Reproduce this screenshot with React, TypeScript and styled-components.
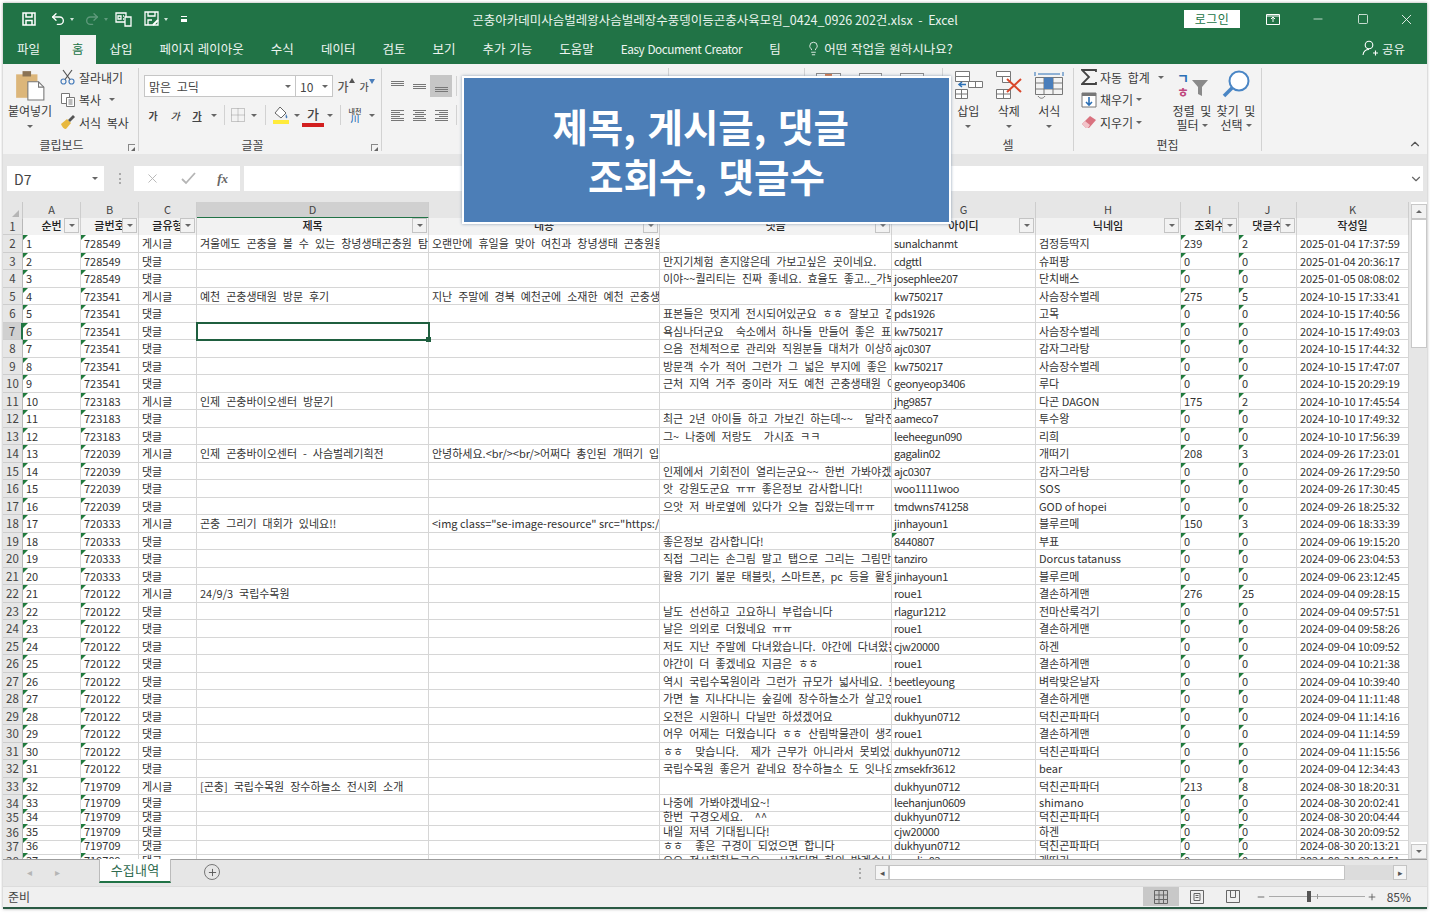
import React from 'react';
import styled, { createGlobalStyle } from 'styled-components';
import { ChevronDown, ChevronUp, Lightbulb, Minus, Plus, Redo2, Square, Undo2, X } from 'lucide-react';

const FONT = '"Noto Sans CJK KR", "Noto Sans", sans-serif';
const GREEN = '#217346';
const COLUMNS = '20px 58px 58px 58px 232px 231px 232px 144px 145px 58px 58px 112px';

const HEADERS = ['순번', '글번호', '글유형', '제목', '내용', '댓글', '아이디', '닉네임', '조회수', '댓글수', '작성일'];
const LETTERS = ['A', 'B', 'C', 'D', 'E', 'F', 'G', 'H', 'I', 'J', 'K'];

// post no, type, title, body, comment, id, nick, views, replies, date
type Row = [string, string, string, string, string, string, string, string, string, string];

const POST = '게시글';
const REPLY = '댓글';

const ROWS: Row[] = [
  ['728549', POST, '겨울에도 곤충을 볼 수 있는 창녕생태곤충원 탐방기', '오랜만에 휴일을 맞아 여친과 창녕생태 곤충원을 방문했습니다', '', 'sunalchanmt', '검정등딱지', '239', '2', '2025-01-04 17:37:59'],
  ['728549', REPLY, '', '', '만지기체험 흔지않은데 가보고싶은 곳이네요.', 'cdgttl', '슈퍼팡', '0', '0', '2025-01-04 20:36:17'],
  ['728549', REPLY, '', '', '이야~~퀄리티는 진짜 좋네요. 효율도 좋고.._가봐야겠어요', 'josephlee207', '단치배스', '0', '0', '2025-01-05 08:08:02'],
  ['723541', POST, '예천 곤충생태원 방문 후기', '지난 주말에 경북 예천군에 소재한 예천 곤충생태원을 다녀왔습니다', '', 'kw750217', '사슴장수벌레', '275', '5', '2024-10-15 17:33:41'],
  ['723541', REPLY, '', '', '표본들은 멋지게 전시되어있군요 ㅎㅎ 잘보고 갑니다', 'pds1926', '고목', '0', '0', '2024-10-15 17:40:56'],
  ['723541', REPLY, '', '', '욕심나더군요  숙소에서 하나둘 만들어 좋은 표본을', 'kw750217', '사슴장수벌레', '0', '0', '2024-10-15 17:49:03'],
  ['723541', REPLY, '', '', '으음 전체적으로 관리와 직원분들 대처가 이상하네요', 'ajc0307', '감자그라탕', '0', '0', '2024-10-15 17:44:32'],
  ['723541', REPLY, '', '', '방문객 수가 적어 그런가 그 넓은 부지에 좋은 시설이', 'kw750217', '사슴장수벌레', '0', '0', '2024-10-15 17:47:07'],
  ['723541', REPLY, '', '', '근처 지역 거주 중이라 저도 예천 곤충생태원 여러번', 'geonyeop3406', '루다', '0', '0', '2024-10-15 20:29:19'],
  ['723183', POST, '인제 곤충바이오센터 방문기', '', '', 'jhg9857', '다곤 DAGON', '175', '2', '2024-10-10 17:45:54'],
  ['723183', REPLY, '', '', '최근 2년 아이들 하고 가보긴 하는데~~  달라진 것이', 'aameco7', '투수왕', '0', '0', '2024-10-10 17:49:32'],
  ['723183', REPLY, '', '', '그~ 나중에 저랑도  가시죠 ㅋㅋ', 'leeheegun090', '리희', '0', '0', '2024-10-10 17:56:39'],
  ['722039', POST, '인제 곤충바이오센터 - 사슴벌레기획전', '안녕하세요.<br/><br/>어쩌다 총인된 개떠기 입니다', '', 'gagalin02', '개떠기', '208', '3', '2024-09-26 17:23:01'],
  ['722039', REPLY, '', '', '인제에서 기회전이 열리는군요~~ 한번 가봐야겠어요', 'ajc0307', '감자그라탕', '0', '0', '2024-09-26 17:29:50'],
  ['722039', REPLY, '', '', '앗 강원도군요 ㅠㅠ 좋은정보 감사합니다!', 'woo1111woo', 'SOS', '0', '0', '2024-09-26 17:30:45'],
  ['722039', REPLY, '', '', '으앗 저 바로옆에 있다가 오늘 집왔는데ㅠㅠ', 'tmdwns741258', 'GOD of hopei', '0', '0', '2024-09-26 18:25:32'],
  ['720333', POST, '곤충 그리기 대회가 있네요!!', '<img class="se-image-resource" src="https://dcimg', '', 'jinhayoun1', '블루르메', '150', '3', '2024-09-06 18:33:39'],
  ['720333', REPLY, '', '', '좋은정보 감사합니다!', '8440807', '부표', '0', '0', '2024-09-06 19:15:20'],
  ['720333', REPLY, '', '', '직접 그리는 손그림 말고 탭으로 그리는 그림만', 'tanziro', 'Dorcus tatanuss', '0', '0', '2024-09-06 23:04:53'],
  ['720333', REPLY, '', '', '활용 기기 불문 태블릿, 스마트폰, pc 등을 활용하여', 'jinhayoun1', '블루르메', '0', '0', '2024-09-06 23:12:45'],
  ['720122', POST, '24/9/3 국립수목원', '', '', 'roue1', '결손하게맨', '276', '25', '2024-09-04 09:28:15'],
  ['720122', REPLY, '', '', '날도 선선하고 고요하니 부럽습니다', 'rlagur1212', '전마산룩걱기', '0', '0', '2024-09-04 09:57:51'],
  ['720122', REPLY, '', '', '날은 의외로 더웠네요 ㅠㅠ', 'roue1', '결손하게맨', '0', '0', '2024-09-04 09:58:26'],
  ['720122', REPLY, '', '', '저도 지난 주말에 다녀왔습니다. 야간에 다녀왔는데', 'cjw20000', '하겐', '0', '0', '2024-09-04 10:09:52'],
  ['720122', REPLY, '', '', '야간이 더 좋겠네요 지금은 ㅎㅎ', 'roue1', '결손하게맨', '0', '0', '2024-09-04 10:21:38'],
  ['720122', REPLY, '', '', '역시 국립수목원이라 그런가 규모가 넓사네요. 모두', 'beetleyoung', '벼락맞은날자', '0', '0', '2024-09-04 10:39:40'],
  ['720122', REPLY, '', '', '가면 늘 지나다니는 숲길에 장수하늘소가 살고있다니', 'roue1', '결손하게맨', '0', '0', '2024-09-04 11:11:48'],
  ['720122', REPLY, '', '', '오전은 시원하니 다닐만 하셨겠어요', 'dukhyun0712', '덕친곤파파더', '0', '0', '2024-09-04 11:14:16'],
  ['720122', REPLY, '', '', '어우 어제는 더웠습니다 ㅎㅎ 산림박물관이 생각보다', 'roue1', '결손하게맨', '0', '0', '2024-09-04 11:14:59'],
  ['720122', REPLY, '', '', 'ㅎㅎ  맞습니다.  제가 근무가 아니라서 못뵈었군요', 'dukhyun0712', '덕친곤파파더', '0', '0', '2024-09-04 11:15:56'],
  ['720122', REPLY, '', '', '국립수목원 좋은거 같네요 장수하늘소 도 잇나요', 'zmsekfr3612', 'bear', '0', '0', '2024-09-04 12:34:43'],
  ['719709', POST, '[곤충] 국립수목원 장수하늘소 전시회 소개', '', '', 'dukhyun0712', '덕친곤파파더', '213', '8', '2024-08-30 18:20:31'],
  ['719709', REPLY, '', '', '나중에 가봐야겠네요~!', 'leehanjun0609', 'shimano', '0', '0', '2024-08-30 20:02:41'],
  ['719709', REPLY, '', '', '한번 구경오세요.  ^^', 'dukhyun0712', '덕친곤파파더', '0', '0', '2024-08-30 20:04:44'],
  ['719709', REPLY, '', '', '내일 저녁 기대됩니다!', 'cjw20000', '하겐', '0', '0', '2024-08-30 20:09:52'],
  ['719709', REPLY, '', '', 'ㅎㅎ  좋은 구경이 되었으면 합니다', 'dukhyun0712', '덕친곤파파더', '0', '0', '2024-08-30 20:13:21'],
  ['719709', REPLY, '', '', '오오 전시회하는구요 .. 시간되면 한의 방계슴니다', 'gagalin02', '개떠기', '0', '0', '2024-08-31 03:04:51'],
];

const TABS = ['삽입', '페이지 레이아웃', '수식', '데이터', '검토', '보기', '추가 기능', '도움말'];

const hasHangul = (text: string) => /[가-힣]/.test(text);

function App() {
  return (
    <Page>
      <GlobalStyle />
      <Window>
        <TitleBar>
          <Quick>
            <QuickSlot $left={18}>
              <svg width="16" height="16" viewBox="0 0 16 16" fill="none" stroke="#fff" strokeWidth="1.5">
                <path d="M2 2h12v12H2z" />
                <path d="M5 2v4h6V2M5 14V9.500h6V14" />
              </svg>
            </QuickSlot>
            <QuickSlot $left={13}>
              <Undo2 size={16} color="#fff" strokeWidth={2} />
              <TinyCaret $color="#cfe3d8" />
            </QuickSlot>
            <QuickSlot $left={10}>
              <Redo2 size={16} color="#5f9a7c" strokeWidth={2} />
              <TinyCaret $color="#5f9a7c" />
            </QuickSlot>
            <QuickSlot $left={7}>
              <svg width="17" height="16" viewBox="0 0 17 16" fill="none" stroke="#fff" strokeWidth="1.300">
                <path d="M1 2h10v9H1zM3 5h3v3H3zM8 5h1M8 8h1" />
                <path d="M10 6h6v9h-6z" fill="#217346" />
              </svg>
            </QuickSlot>
            <QuickSlot $left={12}>
              <svg width="16" height="16" viewBox="0 0 16 16" fill="none" stroke="#fff" strokeWidth="1.300">
                <path d="M1 1h13v13H1zM4 1v4h7V1M4 14V9h4" />
                <path d="M9 14l5-5" strokeWidth="2" />
              </svg>
              <TinyCaret $color="#cfe3d8" />
            </QuickSlot>
            <QuickSlot $left={13}>
              <Customize />
            </QuickSlot>
          </Quick>
          <FileName>곤충아카데미사슴벌레왕사슴벌레장수풍뎅이등곤충사육모임_0424_0926 202건.xlsx &nbsp;-&nbsp; Excel</FileName>
          <Controls>
            <LoginButton>로그인</LoginButton>
            <WindowButton>
              <svg width="14" height="11" viewBox="0 0 14 11" fill="none" stroke="#fff">
                <path d="M.5.500h13v10H.500z" />
                <path d="M7 8V3M5 5l2-2 2 2M.500 2h13" />
              </svg>
            </WindowButton>
            <WindowButton><Minus size={14} color="#fff" strokeWidth={1.2} /></WindowButton>
            <WindowButton><Square size={12} color="#fff" strokeWidth={1.5} /></WindowButton>
            <WindowButton $narrow><X size={17} color="#fff" strokeWidth={1.2} /></WindowButton>
          </Controls>
        </TitleBar>

        <TabBar>
          <MenuTab>파일</MenuTab>
          <MenuTab $active>홈</MenuTab>
          {TABS.map((tab) => (
            <MenuTab key={tab}>{tab}</MenuTab>
          ))}
          <MenuTab $latin>Easy Document Creator</MenuTab>
          <MenuTab>팀</MenuTab>
          <TellMe>
            <Lightbulb size={15} color="#fff" strokeWidth={1.3} />
            어떤 작업을 원하시나요?
          </TellMe>
          <Share>
            <svg width="16" height="16" viewBox="0 0 16 16" fill="none" stroke="#fff" strokeWidth="1.100">
              <circle cx="7" cy="5" r="3.800" />
              <path d="M1 15c.5-3.500 2.500-5.500 6-5.500M11 13h5M13.500 10.500v5" />
            </svg>
            공유
          </Share>
        </TabBar>

        <Ribbon>
          <Group $width={136}>
            <GroupBody>
              <LargeButton $width={54}>
                <svg width="32" height="32" viewBox="0 0 30 30">
                  <path d="M2 5h20v22H2z" fill="#dcb67a" />
                  <path d="M8 2h8v5H8z" fill="#8a7355" />
                  <path d="M13 12h10l5 5v12H13z" fill="#fff" stroke="#777" />
                  <path d="M23 12v5h5" fill="none" stroke="#777" />
                </svg>
                <LargeLabel>붙여넣기</LargeLabel>
                <Caret />
              </LargeButton>
              <SmallList>
                <SmallItem>
                  <svg width="16" height="16" viewBox="0 0 16 16" fill="none" stroke="#4a7ebb" strokeWidth="1.200">
                    <circle cx="3.500" cy="12.500" r="2.500" />
                    <circle cx="11.500" cy="12.500" r="2.500" />
                    <path d="M5 10.500L12 1M10 10.500L3 1" stroke="#555" />
                  </svg>
                  잘라내기
                </SmallItem>
                <SmallItem>
                  <svg width="16" height="16" viewBox="0 0 16 16" fill="#fff" stroke="#777">
                    <path d="M1.500 1.500h8v10h-8z" />
                    <path d="M6.500 5.500h8v9h-8zM8.500 8h4M8.500 10h4M8.500 12h4" />
                  </svg>
                  복사
                  <CaretGap><Caret /></CaretGap>
                </SmallItem>
                <SmallItem>
                  <svg width="16" height="16" viewBox="0 0 16 16">
                    <path d="M1 10l6-5 4 4-5 6c-2 0-4-2-5-5z" fill="#e8b93f" />
                    <path d="M8 6l5-5 2 2-5 5z" fill="#555" />
                  </svg>
                  서식 복사
                </SmallItem>
              </SmallList>
            </GroupBody>
            <GroupLabel $shift={18}>클립보드<Launcher /></GroupLabel>
          </Group>

          <Group $width={243}>
            <GroupBody $column>
              <ToolRow $pad={5}>
                <Combo $width={152}>맑은 고딕<Caret /></Combo>
                <Combo $width={38}>10<Caret /></Combo>
                <SizeGlyph $left={4}>가<svg width="6" height="5" viewBox="0 0 6 5"><path d="M3 0l3 5H0z" fill="#555" /></svg></SizeGlyph>
                <SizeGlyph $left={1} $small>가<svg width="6" height="5" viewBox="0 0 6 5"><path d="M3 5l3-5H0z" fill="#4a7ebb" /></svg></SizeGlyph>
              </ToolRow>
              <ToolRow>
                <ToolButton $width={22} $weight={700}>가</ToolButton>
                <ToolButton $width={22} $italic>가</ToolButton>
                <ToolButton $width={22} $underline>가</ToolButton>
                <ToolButton $width={12}><Caret /></ToolButton>
                <ToolDivider />
                <ToolButton $width={18}>
                  <svg width="14" height="14" viewBox="0 0 14 14" fill="none" stroke="#999" strokeDasharray="1 1">
                    <path d="M.5.500h13v13H.500zM7 .500v13M.500 7h13" />
                  </svg>
                </ToolButton>
                <ToolButton $width={14}><Caret /></ToolButton>
                <ToolDivider />
                <ToolButton $width={22}>
                  <svg width="18" height="18" viewBox="0 0 18 18">
                    <path d="M8 1l6 6-5 5-6-5z" fill="#fff" stroke="#666" />
                    <path d="M14 8c1 2 2 3 1 4s-2-1-1-4z" fill="#4a7ebb" />
                    <path d="M1 14h16v4H1z" fill="#ffeb3b" />
                  </svg>
                </ToolButton>
                <ToolButton $width={10}><Caret /></ToolButton>
                <FontColor>가</FontColor>
                <ToolButton $width={12}><Caret /></ToolButton>
                <ToolDivider />
                <ToolButton $width={20}><Phonetic><b>내천</b><i>川</i></Phonetic></ToolButton>
                <ToolButton $width={14}><Caret /></ToolButton>
              </ToolRow>
            </GroupBody>
            <GroupLabel $shift={15}>글꼴<Launcher /></GroupLabel>
          </Group>

          <Group $width={287}>
            <GroupBody $column>
              <ToolRow $pad={4}>
                <ToolButton $width={22}><Lines variant="top" /></ToolButton>
                <ToolButton $width={22}><Lines variant="middle" /></ToolButton>
                <ToolButton $width={22} $pressed><Lines variant="bottom" /></ToolButton>
                <ToolDivider />
              </ToolRow>
              <ToolRow $pad={4}>
                <ToolButton $width={22}><Lines variant="left" /></ToolButton>
                <ToolButton $width={22}><Lines variant="center" /></ToolButton>
                <ToolButton $width={22}><Lines variant="right" /></ToolButton>
                <ToolDivider />
              </ToolRow>
            </GroupBody>
            <GroupLabel />
          </Group>

          <Group $width={136}>
            <GroupBody />
            <GroupLabel />
          </Group>

          <Group $width={138}>
            <PeekRow>
              <PeekIcon $width={26} $accent />
              <PeekIcon $width={23} />
              <PeekIcon $width={25} />
            </PeekRow>
            <GroupLabel />
          </Group>

          <Group $width={131}>
            <GroupBody $pad={5}>
              <LargeButton $width={40.5}>
                <svg width="32" height="32" viewBox="0 0 32 32" fill="#fff" stroke="#777">
                  <path d="M3.500 2.500h14v5h-14zM3.500 7.500h14v5h-14zM3.500 20.500h12v9h-12zM9.500 20.500v9M3.500 25h12" />
                  <path d="M16.500 12.500h14v6h-14zM23.500 12.500v6" />
                  <path d="M14 15.500H7M10 13l-3 2.500 3 2.500" stroke="#2b6fb5" strokeWidth="1.500" fill="none" />
                </svg>
                <LargeLabel>삽입</LargeLabel>
                <Caret />
              </LargeButton>
              <LargeButton $width={40.5}>
                <svg width="32" height="32" viewBox="0 0 32 32" fill="#fff" stroke="#777">
                  <path d="M3.500 2.500h14v5h-14zM9.500 7.500h8v6h-8zM3.500 20.500h14v9h-14zM10.500 20.500v9M3.500 25h14" />
                  <path d="M14 10l14 13M28 10L14 23" stroke="#d9472b" strokeWidth="2" />
                </svg>
                <LargeLabel>삭제</LargeLabel>
                <Caret />
              </LargeButton>
              <LargeButton $width={40.5}>
                <svg width="32" height="32" viewBox="0 0 32 32" fill="none" stroke="#777">
                  <path d="M2.500 8.500h27v17h-27zM2.500 14h27M2.500 20h27M11 8.500v17M20 8.500v17" />
                  <path d="M11 8.500h9v11.500h-9z" fill="#4a7ebb" stroke="none" />
                  <path d="M2 3v4M30 3v4M5 5h22" stroke="#2b6fb5" />
                  <path d="M5 27c2 3 5 3 7 0" />
                </svg>
                <LargeLabel>서식</LargeLabel>
                <Caret />
              </LargeButton>
            </GroupBody>
            <GroupLabel>셀</GroupLabel>
          </Group>

          <Group $width={188}>
            <GroupBody $pad={7}>
              <SmallList $width={89}>
                <SmallItem>
                  <svg width="16" height="16" viewBox="0 0 16 16" fill="none" stroke="#444" strokeWidth="1.800">
                    <path d="M15 3V1H1l7 7-7 7h14v-2" />
                  </svg>
                  자동 합계
                  <CaretGap><Caret /></CaretGap>
                </SmallItem>
                <SmallItem>
                  <svg width="16" height="16" viewBox="0 0 16 16">
                    <path d="M1 1h14v14H1z" fill="#fff" stroke="#777" />
                    <path d="M1 1h14v3H1z" fill="#777" />
                    <path d="M8 5v8M5 10l3 3 3-3" fill="none" stroke="#2b6fb5" strokeWidth="1.600" />
                  </svg>
                  채우기
                  <Caret />
                </SmallItem>
                <SmallItem>
                  <svg width="16" height="16" viewBox="0 0 16 16">
                    <path d="M1 10l8-8 6 4-7 8H5z" fill="#d9727f" />
                    <path d="M1 10l3-3 5 4-2 3H5z" fill="#f2c3c9" />
                  </svg>
                  지우기
                  <Caret />
                </SmallItem>
              </SmallList>
              <LargeButton $width={44}>
                <SortIcon>
                  <svg width="34" height="28" viewBox="0 0 34 28">
                    <path d="M17 9h16l-6 7v9l-4-2v-7z" fill="#8a8a8a" />
                    <text x="2" y="12" fontSize="13" fontWeight="700" fill="#2b6fb5" fontFamily={FONT}>ㄱ</text>
                    <text x="2" y="26" fontSize="13" fontWeight="700" fill="#c0487e" fontFamily={FONT}>ㅎ</text>
                  </svg>
                </SortIcon>
                <TwoLine>정렬 및<span>필터 <Caret /></span></TwoLine>
              </LargeButton>
              <LargeButton $width={44}>
                <svg width="30" height="30" viewBox="0 0 30 30" fill="none">
                  <circle cx="18" cy="12" r="9.500" stroke="#4a86c5" strokeWidth="2" fill="#fff" />
                  <path d="M11 19l-8 8" stroke="#4a86c5" strokeWidth="3.500" />
                </svg>
                <TwoLine>찾기 및<span>선택 <Caret /></span></TwoLine>
              </LargeButton>
            </GroupBody>
            <GroupLabel>편집</GroupLabel>
          </Group>

          <Collapse><ChevronUp size={14} color="#555" strokeWidth={2} /></Collapse>
        </Ribbon>

        <FormulaBar>
          <NameBox>D7<Caret /></NameBox>
          <FormulaGrip />
          <FormulaButtons>
            <X size={15} color="#b5b5b5" strokeWidth={1.5} />
            <svg width="15" height="13" viewBox="0 0 15 13" fill="none" stroke="#b5b5b5" strokeWidth="1.800"><path d="M1 7l4 4 9-10" /></svg>
            <FxLabel>fx</FxLabel>
          </FormulaButtons>
          <FormulaInput><ChevronDown size={14} color="#666" strokeWidth={2} /></FormulaInput>
        </FormulaBar>

        <Sheet>
          <Grid>
            <ColumnHeaders>
              <Corner><CornerMark /></Corner>
              {LETTERS.map((letter) => (
                <ColumnLetter key={letter} $selected={letter === 'D'}>{letter}</ColumnLetter>
              ))}
            </ColumnHeaders>
            <HeaderRow>
              <RowNumber>1</RowNumber>
              {HEADERS.map((header) => (
                <HeaderCell key={header}>
                  {header}
                  {header !== '작성일' && <FilterButton><Caret /></FilterButton>}
                </HeaderCell>
              ))}
            </HeaderRow>
            {ROWS.map((row, i) => (
              <DataRow key={i} $short={i >= 32}>
                <RowNumber $selected={i === 5}>{i + 2}</RowNumber>
                <Cell $flag $short={i >= 32}>{i + 1}</Cell>
                <Cell $flag $short={i >= 32}>{row[0]}</Cell>
                <Cell $short={i >= 32}>{row[1]}</Cell>
                <Cell $short={i >= 32} $selected={i === 5} $spaced={hasHangul(row[2])}>{row[2]}</Cell>
                <Cell $short={i >= 32} $spaced={hasHangul(row[3])}>{row[3]}</Cell>
                <Cell $short={i >= 32} $spaced={hasHangul(row[4])}>{row[4]}</Cell>
                <Cell $short={i >= 32} $flag={row[5] === '8440807'} $tight>{row[5]}</Cell>
                <Cell $short={i >= 32}>{row[6]}</Cell>
                <Cell $short={i >= 32} $flag>{row[7]}</Cell>
                <Cell $short={i >= 32} $flag>{row[8]}</Cell>
                <Cell $short={i >= 32} $date>{row[9]}</Cell>
              </DataRow>
            ))}
          </Grid>
          <VScroll>
            <ScrollEnd><UpTriangle /></ScrollEnd>
            <VThumb />
            <VTrack />
            <ScrollEnd><Caret /></ScrollEnd>
          </VScroll>
        </Sheet>

        <SheetTabs>
          <NavArrow>◂</NavArrow>
          <NavArrow>▸</NavArrow>
          <SheetTab>수집내역</SheetTab>
          <AddSheet><Plus size={11} color="#555" strokeWidth={2} /></AddSheet>
          <TabSpacer />
          <GripDots />
          <HScroll>
            <HEnd>◂</HEnd>
            <HThumb />
            <HTrack />
            <HEnd>▸</HEnd>
          </HScroll>
        </SheetTabs>

        <StatusBar>
          <Ready>준비</Ready>
          <ViewButton $active>
            <svg width="14" height="14" viewBox="0 0 14 14" fill="none" stroke="#666"><path d="M.5.500h13v13H.500zM.500 5h13M.500 9.500h13M5 .500v13M9.500 .500v13" /></svg>
          </ViewButton>
          <ViewButton>
            <svg width="14" height="14" viewBox="0 0 14 14" fill="none" stroke="#666"><path d="M.5.500h13v13H.500zM4 3.500h6v7H4zM5.500 5.500h3M5.500 7.500h3" /></svg>
          </ViewButton>
          <ViewButton>
            <svg width="14" height="14" viewBox="0 0 14 14" fill="none" stroke="#666"><path d="M.5.500h13v12H.500zM4.500 .500v7h5v-7" /></svg>
          </ViewButton>
          <ZoomMinus><Minus size={10} color="#555" strokeWidth={2} /></ZoomMinus>
          <ZoomTrack><ZoomTick /><ZoomThumb /></ZoomTrack>
          <ZoomPlus><Plus size={10} color="#555" strokeWidth={2} /></ZoomPlus>
          <ZoomValue>85%</ZoomValue>
        </StatusBar>

        <Overlay>
          제목, 게시글, 댓글&nbsp;
          <br />
          조회수, 댓글수
        </Overlay>
      </Window>
    </Page>
  );
}

function Lines({ variant }: { variant: string }) {
  const vertical: Record<string, number> = { top: 1, middle: 4, bottom: 7 };
  if (variant in vertical) {
    const y = vertical[variant];
    return (
      <svg width="15" height="13" viewBox="0 0 15 13" stroke="#777">
        <path d={`M1 ${y + 0.5}h13M1 ${y + 2.5}h13M1 ${y + 4.5}h13`} />
      </svg>
    );
  }
  const short: Record<string, string> = { left: 'M1 3.500h9M1 7.500h9', center: 'M3 3.500h9M3 7.500h9', right: 'M5 3.500h9M5 7.500h9' };
  return (
    <svg width="15" height="13" viewBox="0 0 15 13" stroke="#777">
      <path d={`M1 1.500h13M1 5.500h13M1 9.500h13M1 11.500h13 ${short[variant]}`} />
    </svg>
  );
}

const GlobalStyle = createGlobalStyle`
  html, body { margin: 0; padding: 0; background: #fff; }
  body { font-family: ${FONT}; color: #333; }
  * { box-sizing: border-box; }
  svg { display: block; flex: none; }
`;
const Page = styled.div`
  padding: 3px;
  width: 1430px;
  height: 913px;
  overflow: hidden;
`;
const Window = styled.div`
  position: relative;
  width: 1424px;
  height: 906px;
  display: flex;
  flex-direction: column;
  border-bottom: 2px solid #2a5a44;
  box-shadow: 0 0 3px rgba(0, 0, 0, 0.35);
  background: #f3f3f3;
`;
const TitleBar = styled.div`
  height: 32px;
  display: grid;
  grid-template-columns: 1fr auto 1fr;
  align-items: center;
  background: ${GREEN};
`;
const Quick = styled.div`
  display: flex;
  align-items: center;
`;
const QuickSlot = styled.div<{ $left: number }>`
  display: flex;
  align-items: center;
  gap: 4px;
  margin-left: ${({ $left }) => $left}px;
`;
const TinyCaret = styled.span<{ $color: string }>`
  width: 0;
  height: 0;
  border-left: 2.500px solid transparent;
  border-right: 2.500px solid transparent;
  border-top: 3px solid ${({ $color }) => $color};
`;
const Customize = styled.span`
  width: 6px;
  height: 6px;
  border-top: 1px solid #fff;
  border-bottom: 3px solid #fff;
`;
const FileName = styled.div`
  font-size: 12.500px;
  color: #eaf3ee;
  white-space: nowrap;
`;
const Controls = styled.div`
  display: flex;
  align-items: center;
  justify-content: flex-end;
  height: 100%;
`;
const LoginButton = styled.div`
  width: 56px;
  height: 18px;
  margin-right: 10px;
  background: #fff;
  color: ${GREEN};
  font-size: 12px;
  line-height: 18px;
  text-align: center;
  letter-spacing: 0.500px;
`;
const WindowButton = styled.div<{ $narrow?: boolean }>`
  width: ${({ $narrow }) => ($narrow ? 42 : 45)}px;
  display: flex;
  justify-content: center;
`;
const TabBar = styled.div`
  height: 29px;
  display: flex;
  align-items: stretch;
  padding-left: 0.500px;
  background: ${GREEN};
`;
const MenuTab = styled.div<{ $active?: boolean; $latin?: boolean }>`
  padding: 0 ${({ $active }) => ($active ? 12.500 : 13.500)}px 3px;
  margin-left: ${({ $active }) => ($active ? 6 : 0)}px;
  display: flex;
  align-items: center;
  font-size: ${({ $latin }) => ($latin ? 11.800 : 12.500)}px;
  letter-spacing: ${({ $latin }) => ($latin ? -0.450 : 0)}px;
  word-spacing: 1px;
  white-space: nowrap;
  color: ${({ $active }) => ($active ? GREEN : '#eef5f1')};
  background: ${({ $active }) => ($active ? '#f3f3f3' : 'transparent')};
`;
const TellMe = styled.div`
  display: flex;
  align-items: center;
  gap: 3px;
  margin-left: 12px;
  padding-bottom: 3px;
  font-size: 12.500px;
  word-spacing: 1px;
  color: #eef5f1;
  white-space: nowrap;
`;
const Share = styled.div`
  margin-left: auto;
  margin-right: 22px;
  display: flex;
  align-items: center;
  gap: 4px;
  padding-bottom: 3px;
  font-size: 12.500px;
  color: #eef5f1;
`;
const Ribbon = styled.div`
  height: 90px;
  display: flex;
  padding: 4px 0 3px;
  background: #f3f3f3;
  font-size: 12px;
  word-spacing: 3px;
  color: #3a3a3a;
`;
const Group = styled.div<{ $width: number }>`
  width: ${({ $width }) => $width}px;
  flex: none;
  display: flex;
  flex-direction: column;
  border-right: 1px solid #d2d2d2;
`;
const GroupBody = styled.div<{ $column?: boolean; $pad?: number }>`
  flex: 1;
  display: flex;
  flex-direction: ${({ $column }) => ($column ? 'column' : 'row')};
  gap: ${({ $column }) => ($column ? 7 : 0)}px;
  padding: ${({ $column }) => ($column ? 7 : 0)}px 0 0 ${({ $pad }) => $pad ?? 0}px;
`;
const GroupLabel = styled.div<{ $shift?: number }>`
  position: relative;
  height: 15px;
  line-height: 18px;
  padding-right: ${({ $shift }) => $shift ?? 0}px;
  text-align: center;
  font-size: 12px;
  color: #444;
`;
const Launcher = styled.span`
  position: absolute;
  right: 3px;
  bottom: 0;
  width: 7px;
  height: 7px;
  border-left: 1px solid #888;
  border-top: 1px solid #888;
  &::after {
    content: '';
    position: absolute;
    right: 0;
    bottom: 0;
    width: 0;
    height: 0;
    border-left: 4px solid transparent;
    border-bottom: 4px solid #666;
  }
`;
const LargeButton = styled.div<{ $width: number }>`
  width: ${({ $width }) => $width}px;
  height: 66px;
  flex: none;
  display: flex;
  flex-direction: column;
  align-items: center;
  padding-top: 1px;
`;
const LargeLabel = styled.div`
  margin-top: 1px;
  height: 17px;
  line-height: 17px;
  margin-bottom: 6px;
  white-space: nowrap;
  font-size: 12px;
`;
const TwoLine = styled.div`
  margin-top: 5px;
  line-height: 14px;
  text-align: center;
  white-space: nowrap;
  font-size: 12px;
  span {
    display: flex;
    align-items: center;
    justify-content: center;
    gap: 3px;
  }
`;
const SortIcon = styled.div`
  height: 30px;
  display: flex;
  align-items: flex-end;
`;
const SmallList = styled.div<{ $width?: number }>`
  width: ${({ $width }) => ($width ? `${$width}px` : 'auto')};
  flex: none;
  margin: -2px 0 0 ${({ $width }) => ($width ? 0 : 3)}px;
  display: flex;
  flex-direction: column;
`;
const SmallItem = styled.div`
  height: 22.500px;
  display: flex;
  align-items: center;
  gap: 3px;
  white-space: nowrap;
  font-size: 12px;
`;
const CaretGap = styled.span`
  margin-left: 5px;
  display: flex;
`;
const Caret = styled.span`
  display: inline-block;
  flex: none;
  width: 0;
  height: 0;
  border-left: 3px solid transparent;
  border-right: 3px solid transparent;
  border-top: 3px solid #666;
`;
const UpTriangle = styled(Caret)`
  transform: rotate(180deg);
`;
const ToolRow = styled.div<{ $pad?: number }>`
  height: 22px;
  display: flex;
  align-items: center;
  padding-left: ${({ $pad }) => $pad ?? 3}px;
`;
const Combo = styled.div<{ $width: number }>`
  width: ${({ $width }) => $width}px;
  height: 22px;
  margin-right: -1px;
  padding: 0 4px;
  display: flex;
  align-items: center;
  justify-content: space-between;
  background: #fff;
  border: 1px solid #c6c6c6;
  font-size: 12px;
  color: #444;
`;
const SizeGlyph = styled.div<{ $left: number; $small?: boolean }>`
  width: 20px;
  margin-left: ${({ $left }) => $left}px;
  display: flex;
  justify-content: center;
  align-items: flex-start;
  font-size: ${({ $small }) => ($small ? 10 : 12)}px;
  font-weight: 500;
  color: #555;
`;
const ToolButton = styled.div<{ $width: number; $weight?: number; $italic?: boolean; $underline?: boolean; $pressed?: boolean }>`
  width: ${({ $width }) => $width}px;
  height: 22px;
  flex: none;
  display: flex;
  align-items: center;
  justify-content: center;
  font-size: 10px;
  color: #444;
  font-weight: ${({ $weight, $underline }) => ($weight || $underline ? 700 : 500)};
  font-style: ${({ $italic }) => ($italic ? 'italic' : 'normal')};
  text-decoration: ${({ $underline }) => ($underline ? 'underline' : 'none')};
  background: ${({ $pressed }) => ($pressed ? '#c6c6c6' : 'transparent')};
`;
const ToolDivider = styled.span`
  width: 1px;
  height: 20px;
  margin: 0 4px;
  background: #d2d2d2;
`;
const FontColor = styled.div`
  width: 22px;
  height: 22px;
  display: flex;
  align-items: flex-start;
  justify-content: center;
  font-size: 13px;
  line-height: 17px;
  font-weight: 500;
  color: #444;
  border-bottom: 4px solid #d21f1f;
  margin-top: 2px;
  padding: 0 3px;
`;
const Phonetic = styled.div`
  display: flex;
  flex-direction: column;
  align-items: center;
  line-height: 8px;
  word-spacing: 0;
  b {
    font-size: 7px;
    font-weight: 500;
  }
  i {
    font-size: 9px;
    font-style: normal;
    color: #2b6fb5;
  }
`;
const PeekRow = styled.div`
  flex: 1;
  display: flex;
  padding: 5px 0 0 11px;
`;
const PeekIcon = styled.span<{ $width: number; $accent?: boolean }>`
  width: ${({ $width }) => $width}px;
  height: 6px;
  margin-right: 18px;
  border: 1px solid #888;
  border-bottom: none;
  background: ${({ $accent }) =>
    $accent ? 'linear-gradient(90deg, #fff 35%, #d9723f 35%, #d9723f 65%, #fff 65%)' : '#fff'};
`;
const Collapse = styled.div`
  margin-left: auto;
  margin-right: 5px;
  align-self: flex-end;
  height: 14px;
`;
const FormulaBar = styled.div`
  height: 48px;
  display: flex;
  align-items: flex-start;
  gap: 4px;
  padding: 12px 4px 0;
  background: #e6e6e6;
`;
const NameBox = styled.div`
  width: 97px;
  height: 25px;
  margin-right: 11px;
  padding: 0 6px 0 7px;
  display: flex;
  align-items: center;
  justify-content: space-between;
  background: #fff;
  font-size: 14px;
  color: #444;
`;
const GripDots = styled.span`
  width: 2px;
  height: 11px;
  align-self: center;
  flex: none;
  background: repeating-linear-gradient(#aaa 0 2px, transparent 2px 4.500px);
`;
const FormulaGrip = styled(GripDots)`
  align-self: flex-start;
  margin-top: 7px;
`;
const FormulaButtons = styled.div`
  width: 106px;
  height: 25px;
  margin-left: 9px;
  padding: 0 12px 0 11px;
  display: flex;
  align-items: center;
  justify-content: space-between;
  background: #fff;
`;
const FxLabel = styled.span`
  font-family: "Liberation Serif", serif;
  font-style: italic;
  font-weight: 700;
  font-size: 13px;
  color: #666;
`;
const FormulaInput = styled.div`
  flex: 1;
  height: 25px;
  display: flex;
  align-items: center;
  justify-content: flex-end;
  background: #fff;
`;
const Sheet = styled.div`
  height: 657px;
  display: flex;
  background: #e6e6e6;
`;
const Grid = styled.div`
  width: 1406px;
  height: 100%;
  overflow: hidden;
  background: #fff;
  font-size: 11px;
`;
const ColumnHeaders = styled.div`
  height: 16px;
  display: grid;
  grid-template-columns: ${COLUMNS};
  background: #e6e6e6;
`;
const Corner = styled.div`
  position: relative;
  border-right: 1px solid #c8c8c8;
`;
const CornerMark = styled.span`
  position: absolute;
  right: 3px;
  bottom: 2px;
  width: 0;
  height: 0;
  border-left: 7px solid transparent;
  border-bottom: 7px solid #b5b5b5;
`;
const ColumnLetter = styled.div<{ $selected?: boolean }>`
  text-align: center;
  font-size: 11px;
  line-height: 15px;
  color: #444;
  background: ${({ $selected }) => ($selected ? '#d0d0d0' : '#e6e6e6')};
  border-right: 1px solid #cdcdcd;
  border-bottom: ${({ $selected }) => ($selected ? `2px solid ${GREEN}` : '1px solid #b8b8b8')};
`;
const HeaderRow = styled.div`
  height: 17px;
  display: grid;
  grid-template-columns: ${COLUMNS};
  border-bottom: 1px solid #a8a8a8;
`;
const RowNumber = styled.div<{ $selected?: boolean }>`
  display: flex;
  align-items: center;
  justify-content: center;
  font-size: 11.500px;
  color: #444;
  background: ${({ $selected }) => ($selected ? '#d0d0d0' : '#e6e6e6')};
  border-right: ${({ $selected }) => ($selected ? `2px solid ${GREEN}` : '1px solid #b8b8b8')};
  border-bottom: 1px solid #cdcdcd;
`;
const HeaderCell = styled.div`
  position: relative;
  overflow: hidden;
  text-align: center;
  line-height: 15px;
  font-weight: 500;
  color: #222;
  background: #f2f2f2;
  border-right: 1px solid #d0d0d0;
`;
const FilterButton = styled.span`
  position: absolute;
  right: 1px;
  top: 0;
  width: 15px;
  height: 15px;
  display: flex;
  align-items: center;
  justify-content: center;
  background: #f2f2f2;
  border: 1px solid #c4c4c4;
`;
const DataRow = styled.div<{ $short?: boolean }>`
  height: ${({ $short }) => ($short ? 14.400 : 17.500)}px;
  display: grid;
  grid-template-columns: ${COLUMNS};
`;
const Cell = styled.div<{ $flag?: boolean; $selected?: boolean; $spaced?: boolean; $tight?: boolean; $date?: boolean; $short?: boolean }>`
  position: relative;
  display: flex;
  align-items: center;
  min-width: 0;
  padding: 0 0 ${({ $short }) => ($short ? 2 : 0)}px ${({ $tight }) => ($tight ? 2 : 3)}px;
  overflow: ${({ $selected }) => ($selected ? 'visible' : 'hidden')};
  white-space: pre;
  color: #333;
  word-spacing: ${({ $spaced }) => ($spaced ? 3.500 : 0)}px;
  letter-spacing: ${({ $tight, $date }) => ($tight ? -0.350 : $date ? -0.100 : 0)}px;
  border-right: 1px solid #d6d6d6;
  border-bottom: 1px solid #d6d6d6;
  ${({ $selected }) => ($selected ? `outline: 2px solid #1f5f3f; outline-offset: -1px; z-index: 1;` : '')}
  &::before {
    content: ${({ $flag }) => ($flag ? "''" : 'none')};
    position: absolute;
    left: 0;
    top: 0;
    width: 0;
    height: 0;
    border-top: 5px solid #1f7a3c;
    border-right: 5px solid transparent;
  }
  &::after {
    content: ${({ $selected }) => ($selected ? "''" : 'none')};
    position: absolute;
    right: -3px;
    bottom: -3px;
    width: 5px;
    height: 5px;
    background: #1f5f3f;
  }
`;
const VScroll = styled.div`
  width: 16px;
  margin-left: 2px;
  display: flex;
  flex-direction: column;
  background: #fff;
`;
const ScrollEnd = styled.div`
  height: 15px;
  display: flex;
  align-items: center;
  justify-content: center;
  background: #f2f2f2;
  border: 1px solid #c8c8c8;
  margin-top: 2px;
`;
const VThumb = styled.div`
  height: 129px;
  background: #fff;
  border: 1px solid #c8c8c8;
`;
const VTrack = styled.div`
  flex: 1;
  background: #e6e6e6;
`;
const SheetTabs = styled.div`
  height: 27px;
  display: flex;
  align-items: flex-start;
  background: #e6e6e6;
  border-top: 1px solid #9c9c9c;
`;
const NavArrow = styled.span`
  width: 28px;
  height: 24px;
  line-height: 24px;
  text-align: center;
  font-size: 10px;
  color: #b5b5b5;
  &:first-child {
    margin-left: 12px;
  }
`;
const SheetTab = styled.div`
  width: 72px;
  height: 24px;
  margin: -1px 0 0 28px;
  text-align: center;
  line-height: 22px;
  font-size: 13px;
  letter-spacing: 0.200px;
  color: #2f6b4f;
  background: #fff;
  border-left: 1px solid #bbb;
  border-right: 1px solid #bbb;
  border-bottom: 2px solid ${GREEN};
`;
const AddSheet = styled.div`
  width: 16px;
  height: 16px;
  margin: 4px 0 0 33px;
  display: flex;
  align-items: center;
  justify-content: center;
  border: 1px solid #777;
  border-radius: 50%;
`;
const TabSpacer = styled.div`
  flex: 1;
`;
const HScroll = styled.div`
  width: 532px;
  height: 15px;
  margin: 5px 20px 0 14px;
  display: flex;
`;
const HEnd = styled.div`
  width: 14px;
  height: 15px;
  line-height: 13px;
  text-align: center;
  font-size: 9px;
  color: #555;
  background: #f5f5f5;
  border: 1px solid #c4c4c4;
`;
const HThumb = styled.div`
  width: 456px;
  background: #fff;
  border: 1px solid #c4c4c4;
`;
const HTrack = styled.div`
  flex: 1;
  background: #dcdcdc;
`;
const StatusBar = styled.div`
  height: 21px;
  display: flex;
  align-items: center;
  padding: 0 16px 1px 0;
  background: #f0f0f0;
  border-top: 1px solid #dcdcdc;
`;
const Ready = styled.div`
  margin-right: auto;
  padding-left: 5px;
  font-size: 12px;
  color: #444;
`;
const ViewButton = styled.div<{ $active?: boolean }>`
  width: 36px;
  height: 100%;
  display: flex;
  align-items: center;
  justify-content: center;
  background: ${({ $active }) => ($active ? '#c8c8c8' : 'transparent')};
`;
const ZoomMinus = styled.div`
  width: 10px;
  margin: 0 3px 0 5px;
  display: flex;
  justify-content: center;
`;
const ZoomPlus = styled.div`
  width: 10px;
  margin-left: 2px;
  display: flex;
  justify-content: center;
`;
const ZoomTrack = styled.div`
  position: relative;
  width: 96px;
  height: 1px;
  background: #aaa;
`;
const ZoomThumb = styled.span`
  position: absolute;
  left: 38px;
  top: -5px;
  width: 4px;
  height: 11px;
  background: #555;
`;
const ZoomTick = styled.span`
  position: absolute;
  left: 48px;
  top: -2px;
  width: 1px;
  height: 5px;
  background: #999;
`;
const ZoomValue = styled.div`
  margin-left: 10px;
  font-size: 12px;
  color: #444;
`;
const Overlay = styled.div`
  position: absolute;
  left: 459px;
  top: 73px;
  width: 489px;
  height: 148px;
  padding-top: 22px;
  text-align: center;
  background: #4c7eb7;
  border: 2px solid #fff;
  box-shadow: 0 0 3px #8d9fb3;
  color: #fff;
  font-size: 38.500px;
  word-spacing: 3px;
  line-height: 50px;
  font-weight: 700;
  z-index: 2;
`;

export default App;
